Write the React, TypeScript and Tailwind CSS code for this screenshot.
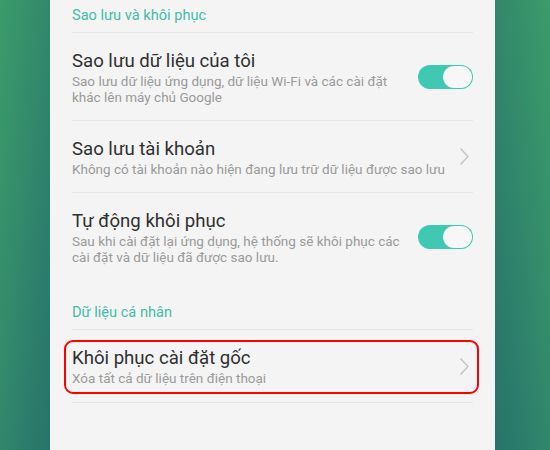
import React from "react";

function Toggle() {
  return (
    <div className="w-[55px] h-[24px] rounded-full bg-[#40c8b2] flex items-center justify-end pr-[1px] shrink-0">
      <div className="w-[29px] h-[22px] rounded-full bg-[#f7f7f7]" />
    </div>
  );
}

function Chevron() {
  return (
    <svg width="11" height="19" viewBox="0 0 11 19" className="shrink-0 mr-[3px]">
      <path d="M1.5 1.5 L9 9.5 L1.5 17.5" fill="none" stroke="#c4c4c4" strokeWidth="1.4" />
    </svg>
  );
}

const title = "text-[18.6px] leading-[24px] text-[#303030]";
const sub = "text-[13.5px] leading-[16px] text-[#9a9a9a]";
const header = "text-[14.6px] leading-[16px] text-[#3fbea7]";

export default function App() {
  return (
    <div className="w-[550px] h-[450px] flex overflow-hidden" style={{ fontFamily: "Roboto, 'Noto Sans', sans-serif" }}>
      <div className="w-[50px] h-full bg-gradient-to-br from-[#3c9c6b] to-[#27736a]" />
      <div className="w-[445px] h-full bg-[#f4f4f4] px-[22px]">
        <div className="h-[33px] flex items-end pb-[9px] border-b border-[#e6e6e6]">
          <span className={header}>Sao lưu và khôi phục</span>
        </div>

        <div className="h-[88px] flex items-center border-b border-[#e6e6e6]">
          <div className="flex-1">
            <div className={title}>Sao lưu dữ liệu của tôi</div>
            <div className={sub}>
              Sao lưu dữ liệu ứng dụng, dữ liệu Wi-Fi và các cài đặt
              <br />
              khác lên máy chủ Google
            </div>
          </div>
          <Toggle />
        </div>

        <div className="h-[72px] flex items-center border-b border-[#e6e6e6]">
          <div className="flex-1">
            <div className={title}>Sao lưu tài khoản</div>
            <div className={sub}>Không có tài khoản nào hiện đang lưu trữ dữ liệu được sao lưu</div>
          </div>
          <Chevron />
        </div>

        <div className="h-[88px] flex items-center">
          <div className="flex-1">
            <div className={title}>Tự động khôi phục</div>
            <div className={sub}>
              Sau khi cài đặt lại ứng dụng, hệ thống sẽ khôi phục các
              <br />
              cài đặt và dữ liệu đã được sao lưu.
            </div>
          </div>
          <Toggle />
        </div>

        <div className="h-[49px] flex items-end pb-[9px] border-b border-[#e6e6e6]">
          <span className={header}>Dữ liệu cá nhân</span>
        </div>

        <div className="relative h-[73px] flex items-center border-b border-[#e6e6e6]">
          <div className="flex-1">
            <div className={title}>Khôi phục cài đặt gốc</div>
            <div className={sub}>Xóa tất cả dữ liệu trên điện thoại</div>
          </div>
          <Chevron />
          <div className="absolute left-[-8px] right-[-6px] top-[10px] bottom-[8px] border-2 border-[#ff0000] rounded-[9px]" />
        </div>
      </div>
      <div className="flex-1 h-full bg-gradient-to-bl from-[#3c9c6b] to-[#27736a]" />
    </div>
  );
}
